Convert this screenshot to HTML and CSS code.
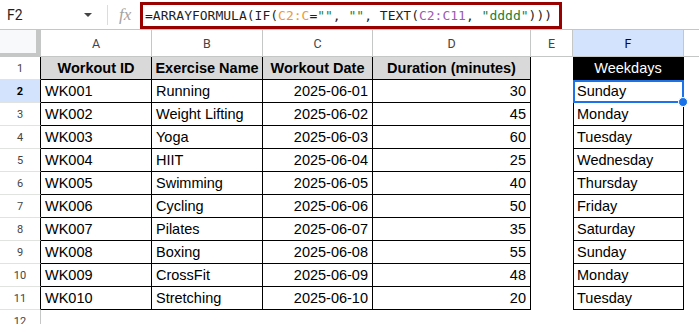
FILE: index.html
```html
<!DOCTYPE html>
<html lang="en">
<head>
    <meta charset="UTF-8">
    <title>Workout Log - Weekdays</title>
    <link rel="stylesheet" href="styles.css">
</head>
<body>
    <div class="topbar">
        <div class="namebox">
            <span class="ref">F2</span>
            <span class="caret"></span>
        </div>
        <div class="sep"></div>
        <div class="fx">fx</div>
        <div class="formula">=ARRAYFORMULA(IF(<span class="r1">C2:C</span>=<span class="str">""</span>, <span class="str">""</span>, TEXT(<span class="r2">C2:C11</span>, <span class="str">"dddd"</span>)))</div>
    </div>

    <div class="sheet">
        <div class="corner"></div>
        <div class="ch">A</div>
        <div class="ch">B</div>
        <div class="ch">C</div>
        <div class="ch">D</div>
        <div class="ch">E</div>
        <div class="ch active">F</div>
        <div class="ch last"></div>

        <div class="rh t">1</div>
        <div class="c hd">Workout ID</div>
        <div class="c hd">Exercise Name</div>
        <div class="c hd">Workout Date</div>
        <div class="c hd">Duration (minutes)</div>
        <div class="e"></div>
        <div class="c f wk">Weekdays</div>
        <div class="e"></div>

        <div class="rh t active">2</div>
        <div class="c">WK001</div>
        <div class="c">Running</div>
        <div class="c num">2025-06-01</div>
        <div class="c num">30</div>
        <div class="e"></div>
        <div class="c f sel">Sunday<span class="outline"></span><span class="handle"></span></div>
        <div class="e"></div>

        <div class="rh t">3</div>
        <div class="c">WK002</div>
        <div class="c">Weight Lifting</div>
        <div class="c num">2025-06-02</div>
        <div class="c num">45</div>
        <div class="e"></div>
        <div class="c f">Monday</div>
        <div class="e"></div>

        <div class="rh t">4</div>
        <div class="c">WK003</div>
        <div class="c">Yoga</div>
        <div class="c num">2025-06-03</div>
        <div class="c num">60</div>
        <div class="e"></div>
        <div class="c f">Tuesday</div>
        <div class="e"></div>

        <div class="rh t">5</div>
        <div class="c">WK004</div>
        <div class="c">HIIT</div>
        <div class="c num">2025-06-04</div>
        <div class="c num">25</div>
        <div class="e"></div>
        <div class="c f">Wednesday</div>
        <div class="e"></div>

        <div class="rh t">6</div>
        <div class="c">WK005</div>
        <div class="c">Swimming</div>
        <div class="c num">2025-06-05</div>
        <div class="c num">40</div>
        <div class="e"></div>
        <div class="c f">Thursday</div>
        <div class="e"></div>

        <div class="rh t">7</div>
        <div class="c">WK006</div>
        <div class="c">Cycling</div>
        <div class="c num">2025-06-06</div>
        <div class="c num">50</div>
        <div class="e"></div>
        <div class="c f">Friday</div>
        <div class="e"></div>

        <div class="rh t">8</div>
        <div class="c">WK007</div>
        <div class="c">Pilates</div>
        <div class="c num">2025-06-07</div>
        <div class="c num">35</div>
        <div class="e"></div>
        <div class="c f">Saturday</div>
        <div class="e"></div>

        <div class="rh t">9</div>
        <div class="c">WK008</div>
        <div class="c">Boxing</div>
        <div class="c num">2025-06-08</div>
        <div class="c num">55</div>
        <div class="e"></div>
        <div class="c f">Sunday</div>
        <div class="e"></div>

        <div class="rh t">10</div>
        <div class="c">WK009</div>
        <div class="c">CrossFit</div>
        <div class="c num">2025-06-09</div>
        <div class="c num">48</div>
        <div class="e"></div>
        <div class="c f">Monday</div>
        <div class="e"></div>

        <div class="rh t">11</div>
        <div class="c">WK010</div>
        <div class="c">Stretching</div>
        <div class="c num">2025-06-10</div>
        <div class="c num">20</div>
        <div class="e"></div>
        <div class="c f">Tuesday</div>
        <div class="e"></div>

        <div class="rh">12</div>
    </div>
</body>
</html>
```

FILE: styles.css
```css
body {
    margin: 0;
    width: 699px;
    height: 324px;
    overflow: hidden;
    background: #fff;
    font-family: "Liberation Sans", Arial, sans-serif;
}

/* formula bar */
.topbar {
    display: flex;
    align-items: center;
    height: 29px;
    border-bottom: 1px solid #c4c7c5;
}

.namebox {
    width: 93px;
    box-sizing: border-box;
    padding: 0 1px 0 7px;
    display: flex;
    align-items: center;
    justify-content: space-between;
}

.ref {
    font-family: Roboto, "Liberation Sans", sans-serif;
    font-size: 14px;
    color: #1f1f1f;
}

.caret {
    width: 0;
    height: 0;
    border-left: 4px solid transparent;
    border-right: 4px solid transparent;
    border-top: 4px solid #444;
}

.sep {
    width: 1px;
    height: 20px;
    margin: 0 11px 0 14px;
    background: #dadce0;
}

.fx {
    width: 16px;
    font-family: "Liberation Serif", serif;
    font-style: italic;
    font-size: 17px;
    color: #a3a3a3;
    margin-right: 5px;
}

.formula {
    align-self: flex-end;
    width: 422px;
    height: 27px;
    box-sizing: border-box;
    border: 3px solid #990000;
    padding-left: 2px;
    font-family: "DejaVu Sans Mono", monospace;
    font-size: 13px;
    line-height: 21px;
    color: #1f1f1f;
    white-space: nowrap;
    overflow: hidden;
}

.r1 { color: #f09a34; }
.r2 { color: #9a5cb4; }
.str { color: #188038; }

/* grid */
.sheet {
    display: grid;
    grid-template-columns: 41px 111px 111px 110px 158px 42px 111px 1fr;
    grid-template-rows: 27px;
    grid-auto-rows: 23px;
}

.corner {
    background: #f8f9fa;
    border-right: 5px solid #c4c7c5;
    border-bottom: 4px solid #c4c7c5;
}

.ch {
    border-right: 1px solid #c4c7c5;
    border-bottom: 1px solid #c4c7c5;
    font-family: Roboto, "Liberation Sans", sans-serif;
    font-size: 12.5px;
    color: #444;
    display: flex;
    align-items: center;
    justify-content: center;
}

.ch.active {
    background: #d3e3fd;
    color: #0b0b0b;
}

.ch.last {
    border-right: none;
}

.rh {
    border-right: 1px solid #c4c7c5;
    border-bottom: 1px solid #e1e3e1;
    font-family: Roboto, "Liberation Sans", sans-serif;
    font-size: 11px;
    color: #444;
    display: flex;
    align-items: center;
    justify-content: center;
}

.rh.t {
    border-right-color: #000;
}

.rh.active {
    background: #d3e3fd;
    color: #000;
    font-weight: bold;
}

.c {
    border-right: 1px solid #000;
    border-bottom: 1px solid #000;
    padding: 0 4px;
    font-size: 14.5px;
    color: #000;
    display: flex;
    align-items: center;
    white-space: nowrap;
    overflow: hidden;
}

.c.num {
    justify-content: flex-end;
}

.c.hd {
    background: #d9d9d9;
    font-weight: bold;
    justify-content: center;
}

.c.f {
    border-left: 1px solid #000;
    padding-left: 3px;
}

.c.wk {
    background: #000;
    color: #fff;
    justify-content: center;
}

.c.sel {
    position: relative;
    overflow: visible;
}

.outline {
    position: absolute;
    left: -1px;
    right: -1px;
    top: 0;
    bottom: -1px;
    border: 2px solid #1a73e8;
}

.handle {
    position: absolute;
    right: -5px;
    bottom: -5px;
    width: 8px;
    height: 8px;
    border-radius: 50%;
    background: #1a73e8;
    border: 1px solid #fff;
    z-index: 2;
}
```
